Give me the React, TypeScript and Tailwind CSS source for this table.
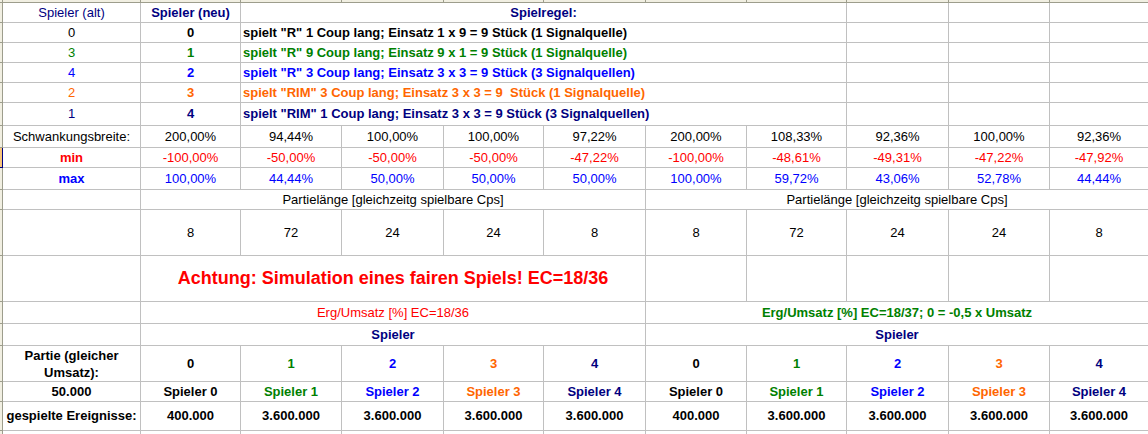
import React from "react";

const NAVY = "text-[#000080]";
const GREEN = "text-[#008000]";
const BLUE = "text-[#0000ff]";
const ORANGE = "text-[#ff6600]";
const RED = "text-[#ff0000]";

const playerColors = ["text-black", GREEN, BLUE, ORANGE, NAVY];

type CellProps = {
  className?: string;
  children?: React.ReactNode;
};

function Cell({ className = "", children }: CellProps) {
  return (
    <div
      className={`flex items-center justify-center overflow-hidden whitespace-nowrap border-r border-b border-[#c0c0c0] ${className}`}
    >
      {children}
    </div>
  );
}

function RowHead({ active = false }: { active?: boolean }) {
  return active ? (
    <div className="border-r border-b border-[#000080] bg-[#f8c67a]" />
  ) : (
    <div className="border-r border-b border-[#9d9d8c] bg-[#f1efe2]" />
  );
}

const rules = [
  { alt: "0", neu: "0", text: 'spielt "R" 1 Coup lang; Einsatz 1 x 9 = 9 Stück (1 Signalquelle)', color: "text-black" },
  { alt: "3", neu: "1", text: 'spielt "R" 9 Coup lang; Einsatz 9 x 1 = 9 Stück (1 Signalquelle)', color: GREEN },
  { alt: "4", neu: "2", text: 'spielt "R" 3 Coup lang; Einsatz 3 x 3 = 9 Stück (3 Signalquellen)', color: BLUE },
  { alt: "2", neu: "3", text: 'spielt "RIM" 3 Coup lang; Einsatz 3 x 3 = 9\u00a0\u00a0Stück (1 Signalquelle)', color: ORANGE },
  { alt: "1", neu: "4", text: 'spielt "RIM" 1 Coup lang; Einsatz 3 x 3 = 9 Stück (3 Signalquellen)', color: NAVY },
];

const breite = ["200,00%", "94,44%", "100,00%", "100,00%", "97,22%", "200,00%", "108,33%", "92,36%", "100,00%", "92,36%"];
const mins = ["-100,00%", "-50,00%", "-50,00%", "-50,00%", "-47,22%", "-100,00%", "-48,61%", "-49,31%", "-47,22%", "-47,92%"];
const maxs = ["100,00%", "44,44%", "50,00%", "50,00%", "50,00%", "100,00%", "59,72%", "43,06%", "52,78%", "44,44%"];
const laengen = ["8", "72", "24", "24", "8", "8", "72", "24", "24", "8"];
const ereignisse = ["400.000", "3.600.000", "3.600.000", "3.600.000", "3.600.000", "400.000", "3.600.000", "3.600.000", "3.600.000", "3.600.000"];
const players = [0, 1, 2, 3, 4, 0, 1, 2, 3, 4];

export default function App() {
  return (
    <div className="h-[434px] w-[1148px] overflow-hidden bg-white font-['Liberation_Sans',Arial,sans-serif] text-[13px] text-black">
      <div className="grid grid-cols-[3px_138px_100px_101px_102px_100px_102px_101px_100px_102px_101px_99px] grid-rows-[3px_20px_20px_20px_20px_20px_23px_22px_20px_22px_20px_46px_46px_22px_22px_36px_20px_29px_20px]">
        {/* column header edge */}
        {Array.from({ length: 12 }).map((_, i) => (
          <div key={`h${i}`} className="border-r border-b border-[#9d9d8c] bg-[#f1efe2]" />
        ))}

        {/* header */}
        <RowHead />
        <Cell className={NAVY}>Spieler (alt)</Cell>
        <Cell className={`font-bold ${NAVY}`}>Spieler (neu)</Cell>
        <Cell className={`col-span-6 font-bold ${NAVY}`}>Spielregel:</Cell>
        <Cell />
        <Cell />
        <Cell />

        {rules.map((r) => (
          <React.Fragment key={r.neu}>
            <RowHead />
            <Cell className={r.color}>{r.alt}</Cell>
            <Cell className={`font-bold ${r.color}`}>{r.neu}</Cell>
            <Cell className={`col-span-6 justify-start pl-[2px] font-bold ${r.color}`}>{r.text}</Cell>
            <Cell />
            <Cell />
            <Cell />
          </React.Fragment>
        ))}

        {/* Schwankungsbreite */}
        <RowHead />
        <Cell>Schwankungsbreite:</Cell>
        {breite.map((v, i) => (
          <Cell key={`b${i}`}>{v}</Cell>
        ))}

        <RowHead active />
        <Cell className={`font-bold ${RED}`}>min</Cell>
        {mins.map((v, i) => (
          <Cell key={`mi${i}`} className={RED}>
            {v}
          </Cell>
        ))}

        <RowHead />
        <Cell className={`font-bold ${BLUE}`}>max</Cell>
        {maxs.map((v, i) => (
          <Cell key={`ma${i}`} className={BLUE}>
            {v}
          </Cell>
        ))}

        {/* Partielänge */}
        <RowHead />
        <Cell />
        <Cell className="col-span-5">Partielänge [gleichzeitg spielbare Cps]</Cell>
        <Cell className="col-span-5">Partielänge [gleichzeitg spielbare Cps]</Cell>

        <RowHead />
        <Cell />
        {laengen.map((v, i) => (
          <Cell key={`l${i}`}>{v}</Cell>
        ))}

        {/* Achtung */}
        <RowHead />
        <Cell />
        <Cell className={`col-span-5 text-[18px] font-bold ${RED}`}>
          Achtung: Simulation eines fairen Spiels! EC=18/36
        </Cell>
        <Cell />
        <Cell />
        <Cell />
        <Cell />
        <Cell />

        <RowHead />
        <Cell />
        <Cell className={`col-span-5 ${RED}`}>Erg/Umsatz [%] EC=18/36</Cell>
        <Cell className={`col-span-5 font-bold ${GREEN}`}>Erg/Umsatz [%] EC=18/37; 0 = -0,5 x Umsatz</Cell>

        <RowHead />
        <Cell />
        <Cell className={`col-span-5 font-bold ${NAVY}`}>Spieler</Cell>
        <Cell className={`col-span-5 font-bold ${NAVY}`}>Spieler</Cell>

        {/* Partie */}
        <RowHead />
        <Cell className="whitespace-normal text-center font-bold leading-[17px]">
          Partie (gleicher
          <br />
          Umsatz):
        </Cell>
        {players.map((p, i) => (
          <Cell key={`p${i}`} className={`font-bold ${playerColors[p]}`}>
            {p}
          </Cell>
        ))}

        <RowHead />
        <Cell className="font-bold">50.000</Cell>
        {players.map((p, i) => (
          <Cell key={`s${i}`} className={`font-bold ${playerColors[p]}`}>
            Spieler {p}
          </Cell>
        ))}

        <RowHead />
        <Cell className="font-bold">gespielte Ereignisse:</Cell>
        {ereignisse.map((v, i) => (
          <Cell key={`e${i}`} className="font-bold">
            {v}
          </Cell>
        ))}

        <RowHead />
        {Array.from({ length: 11 }).map((_, i) => (
          <Cell key={`x${i}`} />
        ))}
      </div>
    </div>
  );
}
